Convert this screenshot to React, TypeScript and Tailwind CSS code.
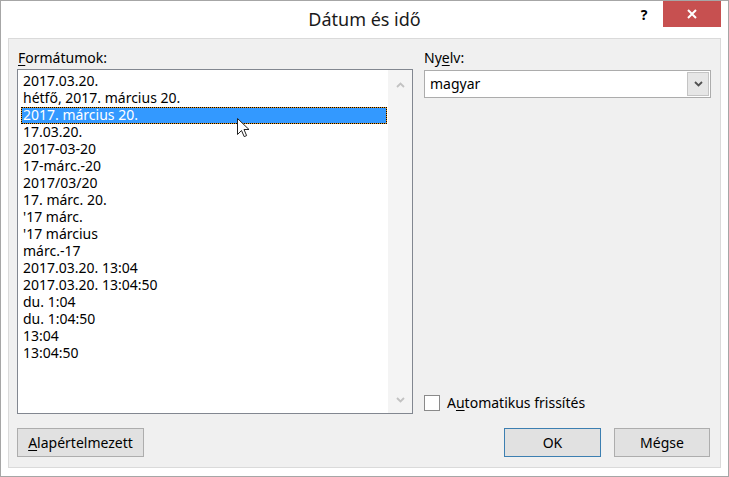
import React from "react";

const items = [
  "2017.03.20.",
  "hétfő, 2017. március 20.",
  "2017. március 20.",
  "17.03.20.",
  "2017-03-20",
  "17-márc.-20",
  "2017/03/20",
  "17. márc. 20.",
  "'17 márc.",
  "'17 március",
  "márc.-17",
  "2017.03.20. 13:04",
  "2017.03.20. 13:04:50",
  "du. 1:04",
  "du. 1:04:50",
  "13:04",
  "13:04:50",
];

function Chevron({ up, color }: { up?: boolean; color: string }) {
  return (
    <svg width="9" height="6" viewBox="0 0 9 6">
      <path
        d={up ? "M1 5 L4.5 1.5 L8 5" : "M1 1 L4.5 4.5 L8 1"}
        fill="none"
        stroke={color}
        strokeWidth="1.8"
      />
    </svg>
  );
}

export default function App() {
  return (
    <div className="relative w-[729px] h-[477px] border border-[#a6a6a6] bg-white flex flex-col font-['Noto_Sans',sans-serif] text-[14px] text-black">
      {/* Title bar */}
      <div className="h-[37px] grid grid-cols-[1fr_auto_1fr]">
        <div />
        <div className="flex items-center text-[18px] text-[#1a1a1a] pb-[1px]">Dátum és idő</div>
        <div className="flex justify-end items-start pr-[7px]">
          <div className="w-[20px] h-[26px] flex items-center justify-center font-bold text-[14px] text-black mr-[9px]">?</div>
          <div className="w-[58px] h-[26px] bg-[#c75050] flex items-center justify-center">
            <svg width="10" height="10" viewBox="0 0 10 10">
              <path d="M1 1 L9 9 M9 1 L1 9" stroke="white" strokeWidth="2" />
            </svg>
          </div>
        </div>
      </div>

      {/* Client area */}
      <div className="mx-[7px] mb-[8px] flex-1 border border-[#dadada] bg-[#f0f0f0] pl-[8px] pr-[9px] pt-[11px] pb-[10px] flex gap-[11px]">
        {/* Left column */}
        <div className="w-[396px] flex flex-col">
          <div className="h-[16px] leading-[16px] pl-[1px]">
            <span className="underline underline-offset-2">F</span>ormátumok:
          </div>
          <div className="mt-[3px] h-[345px] border border-[#828790] bg-white flex">
            <div className="flex-1 pl-[3px] pt-[3px] pr-[1px] flex flex-col">
              {items.map((t, i) =>
                i === 2 ? (
                  <div key={i} className="h-[17px] bg-[#e8961e]">
                    <div className="h-[17px] border border-dotted border-black bg-[#3399ff] bg-clip-padding text-white pl-[1px] leading-[13px] whitespace-nowrap">
                      {t}
                    </div>
                  </div>
                ) : (
                  <div key={i} className="h-[17px] leading-[15px] pl-[2px] whitespace-nowrap">
                    {t}
                  </div>
                )
              )}
            </div>
            <div className="w-[24px] bg-[#f4f4f4] flex flex-col items-center justify-between pt-[12px] pb-[10px]">
              <Chevron up color="#c2c2c2" />
              <Chevron color="#c2c2c2" />
            </div>
          </div>
          <div className="mt-[14px] w-[127px] h-[29px] border border-[#adadad] bg-[#e1e1e1] flex items-center justify-center">
            <span className="pb-[1px]">
              <span className="underline underline-offset-2">A</span>lapértelmezett
            </span>
          </div>
        </div>

        {/* Right column */}
        <div className="flex-1 flex flex-col">
          <div className="h-[16px] leading-[16px]">
            Ny<span className="underline underline-offset-2">e</span>lv:
          </div>
          <div className="mt-[4px] h-[28px] border border-[#acacac] bg-white flex">
            <div className="flex-1 flex items-center pl-[5px] pb-[1px]">magyar</div>
            <div className="w-[22px] m-[1px] border border-[#c4c4c4] bg-[#e6e6e6] flex items-center justify-center">
              <Chevron color="#505050" />
            </div>
          </div>
          <div className="flex-1" />
          <div className="h-[17px] flex items-center">
            <div className="w-[16px] h-[16px] border border-[#8a8a8a] bg-white" />
            <div className="ml-[7px] pb-[1px]">
              A<span className="underline underline-offset-2">u</span>tomatikus frissítés
            </div>
          </div>
          <div className="mt-[17px] flex justify-end gap-[13px] pr-[1px]">
            <div className="w-[97px] h-[29px] border border-[#3c7fb1] bg-[#e1e1e1] flex items-center justify-center pb-[1px]">OK</div>
            <div className="w-[96px] h-[29px] border border-[#adadad] bg-[#e1e1e1] flex items-center justify-center pb-[1px]">Mégse</div>
          </div>
        </div>
      </div>

      {/* Mouse cursor */}
      <svg className="absolute left-[236px] top-[117px]" width="13" height="20" viewBox="0 0 13 20">
        <path
          d="M0.5 0.5 L0.5 16.5 L4.5 12.5 L7.2 18.6 L9.6 17.6 L7 11.5 L12 11.5 Z"
          fill="white"
          stroke="#222"
          strokeWidth="1"
          strokeLinejoin="miter"
        />
      </svg>
    </div>
  );
}
